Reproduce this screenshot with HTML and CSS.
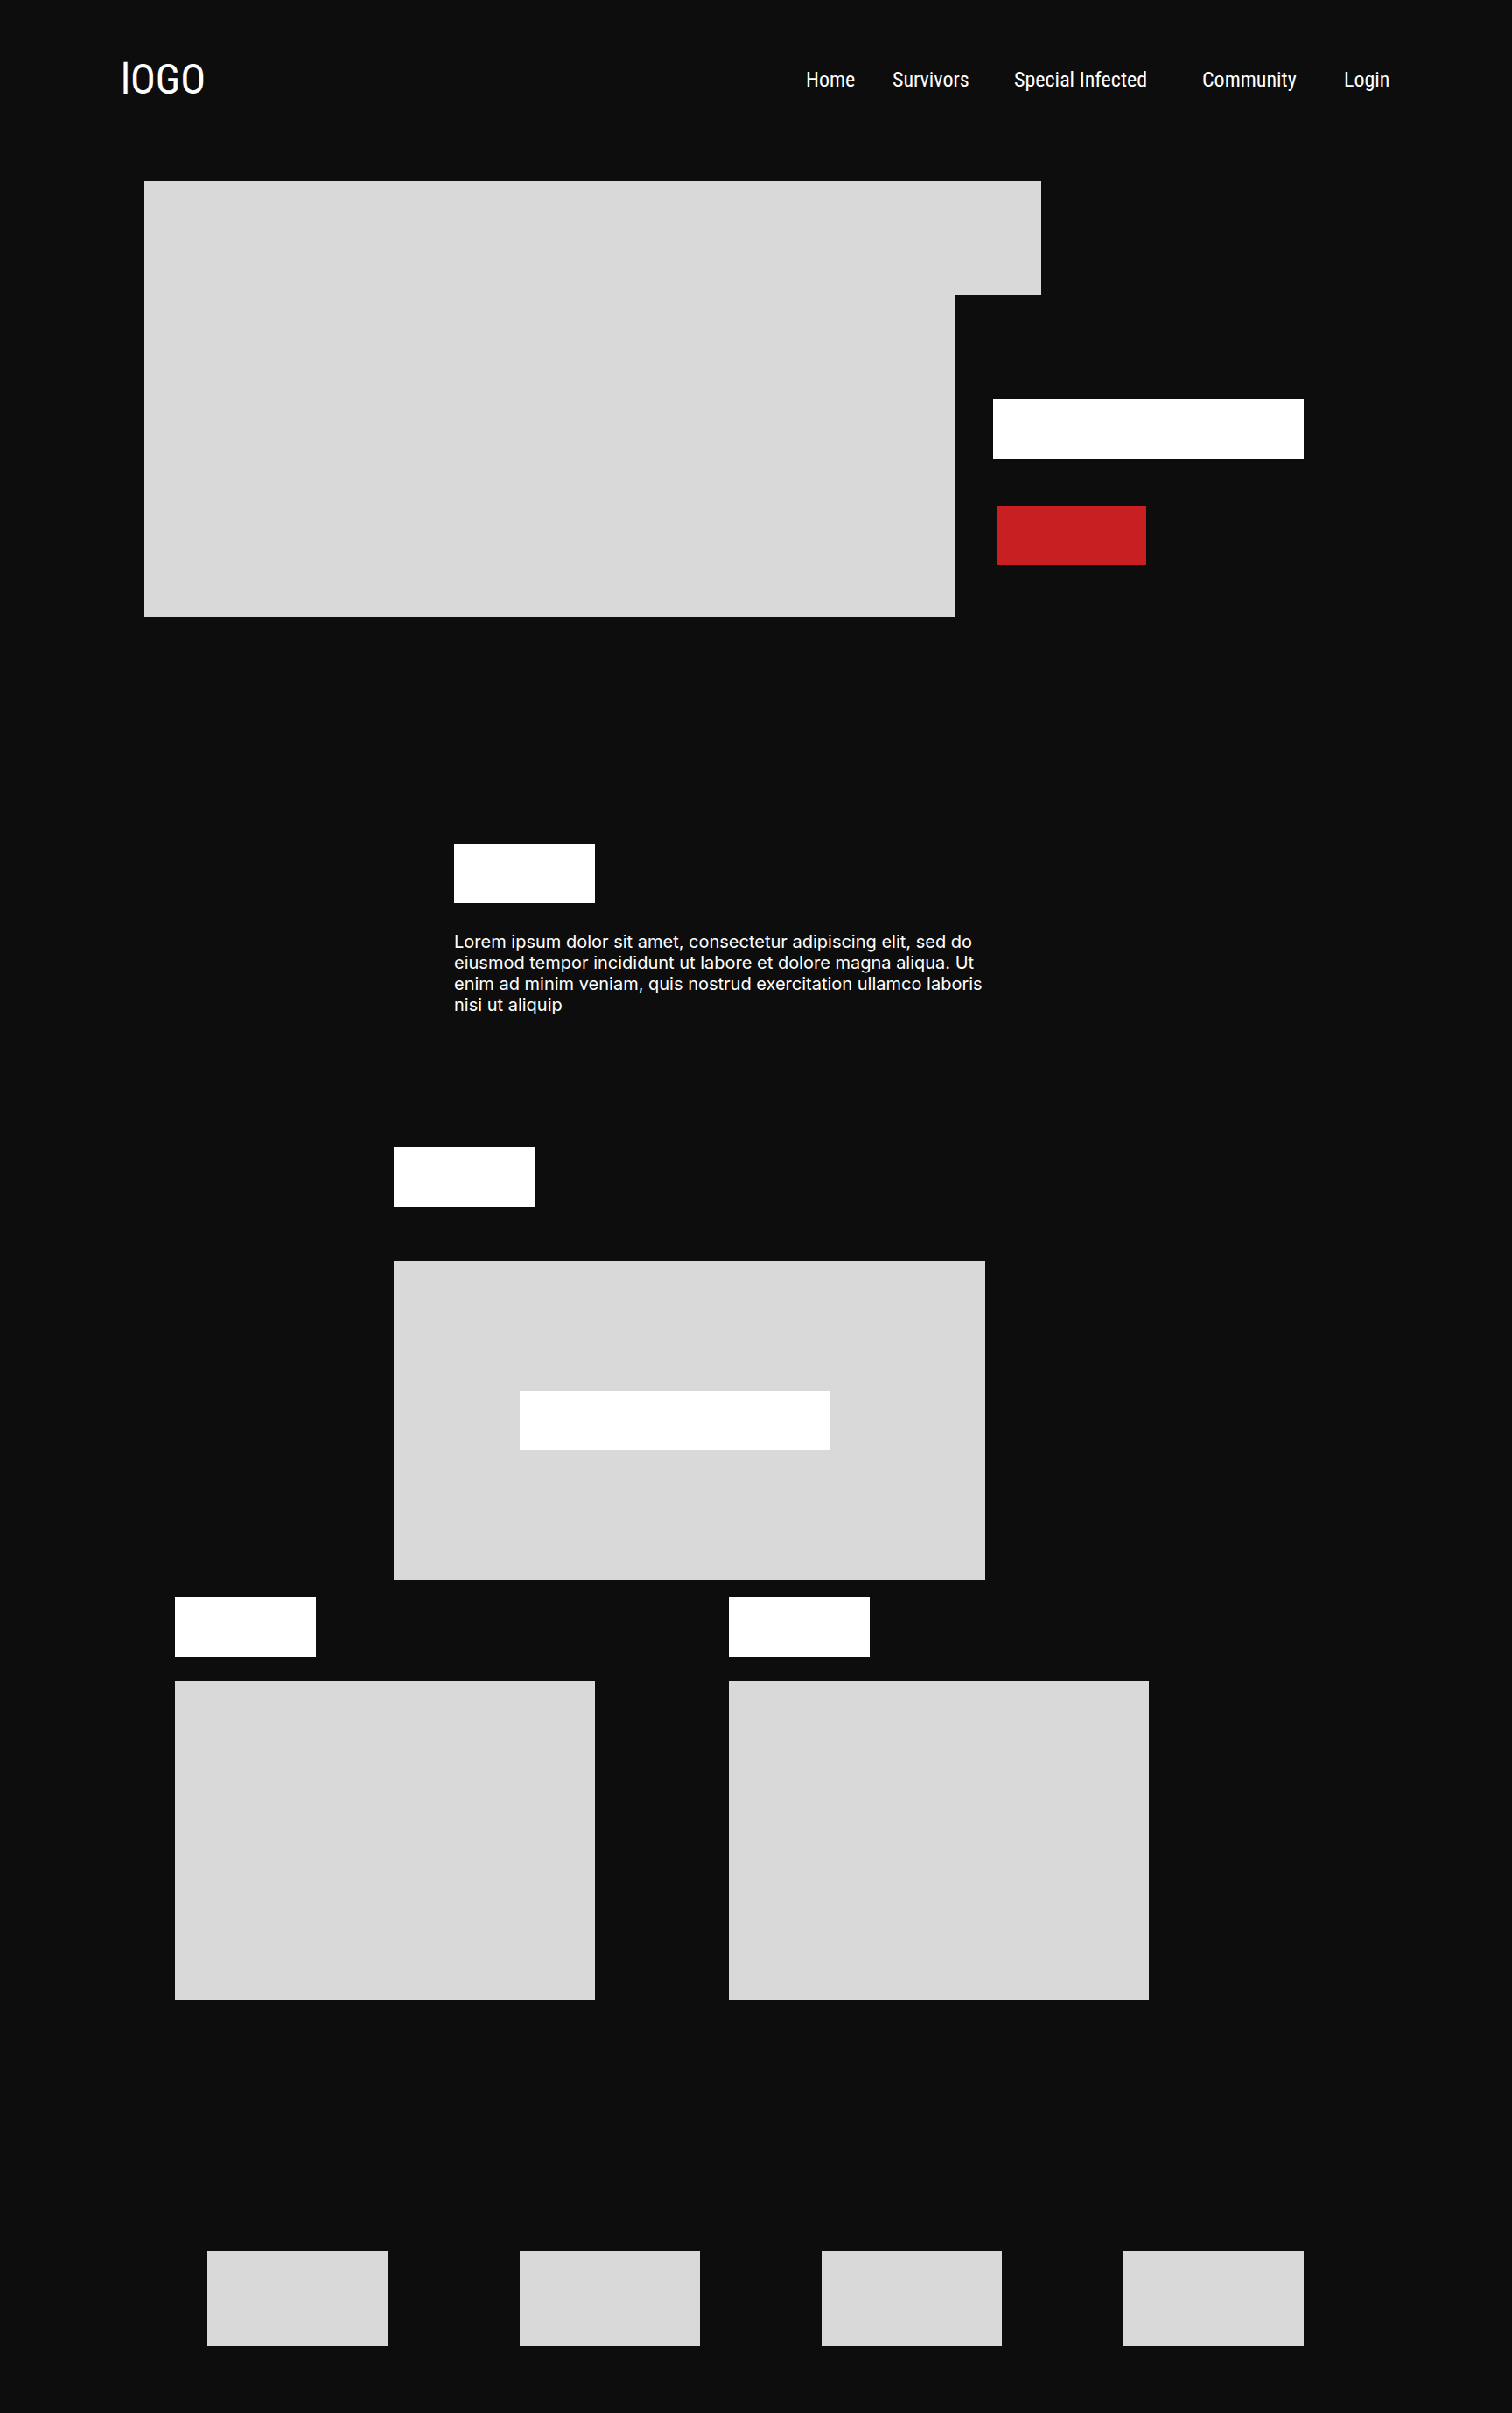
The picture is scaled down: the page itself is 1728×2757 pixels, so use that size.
FILE: index.html
```html
<!DOCTYPE html>
<html lang="en">
<head>
  <meta charset="utf-8">
  <meta name="viewport" content="width=device-width, initial-scale=1">
  <title>Home</title>
  <link rel="stylesheet" href="styles.css">
</head>
<body>
  <header class="header">
    <a class="logo" href="#">lOGO</a>
    <nav class="nav" aria-label="Main">
      <a href="#">Home</a>
      <a href="#">Survivors</a>
      <a href="#">Special Infected</a>
      <a href="#">Community</a>
      <a href="#">Login</a>
    </nav>
  </header>

  <main>
    <section class="hero">
      <div class="hero-banner media"></div>
      <div class="hero-picture media"></div>
      <div class="hero-copy">
        <div class="block"></div>
        <button class="hero-button" type="button" aria-label="Start"></button>
      </div>
    </section>

    <section class="about">
      <div class="label block"></div>
      <p class="about-text">Lorem ipsum dolor sit amet, consectetur adipiscing elit, sed do eiusmod tempor incididunt ut labore et dolore magna aliqua. Ut enim ad minim veniam, quis nostrud exercitation ullamco laboris nisi ut aliquip</p>
    </section>

    <section class="feature">
      <div class="label block"></div>
      <div class="feature-card media">
        <div class="feature-title block"></div>
      </div>
    </section>

    <section class="cards">
      <article class="card">
        <div class="label block"></div>
        <div class="card-picture media"></div>
      </article>
      <article class="card card-second">
        <div class="label block"></div>
        <div class="card-picture media"></div>
      </article>
    </section>
  </main>

  <footer class="footer">
    <div class="tile media"></div>
    <div class="tile media"></div>
    <div class="tile media"></div>
    <div class="tile media"></div>
  </footer>
</body>
</html>
```

FILE: styles.css
```css
* {
  box-sizing: border-box;
}

body {
  margin: 0;
  background: #0d0d0d;
  color: #fff;
  font-family: Inter, "Liberation Sans", sans-serif;
}

.media {
  background: #d9d9d9;
}

.block {
  height: 68px;
  background: #fff;
}

.label {
  width: 161px;
}

/* Header */
.header {
  display: grid;
  grid-template-columns: 138fr 783fr 807fr;
  align-items: center;
  padding: 63px 0 88px;
  font-family: "Roboto Condensed", "Liberation Sans Narrow", Roboto, sans-serif;
}

.header a {
  color: inherit;
  text-decoration: none;
  white-space: nowrap;
}

.logo {
  grid-column: 2;
  font-size: 48px;
  line-height: 56px;
}

.nav {
  display: grid;
  grid-template-columns: 99fr 139fr 215fr 162fr 192fr;
  font-size: 24px;
  line-height: 28px;
}

/* Hero */
.hero {
  display: grid;
  grid-template-columns: 165fr 926fr 44fr 55fr 300fr 238fr;
  grid-template-rows: 130px 368px;
}

.hero-banner {
  grid-area: 1 / 2 / 2 / 5;
}

.hero-picture {
  grid-area: 1 / 2 / 3 / 3;
}

.hero-copy {
  grid-area: 2 / 4 / 3 / 6;
  padding-top: 119px;
}

.hero-button {
  display: block;
  width: 171px;
  height: 68px;
  margin: 54px 4px 0;
  border: 0;
  background: #c81f22;
  cursor: pointer;
}

/* About */
.about {
  display: grid;
  grid-template-columns: 519fr 609fr 600fr;
  row-gap: 32px;
  padding-top: 259px;
}

.about > * {
  grid-column: 2;
}

.about-text {
  margin: 0;
  font-size: 20px;
  line-height: 24px;
}

/* Feature */
.feature {
  display: grid;
  grid-template-columns: 450fr 676fr 602fr;
  row-gap: 62px;
  padding-top: 151px;
}

.feature > * {
  grid-column: 2;
}

.feature-card {
  display: grid;
  grid-template-columns: 144fr 355fr 177fr;
  align-items: center;
  min-height: 364px;
}

.feature-title {
  grid-column: 2;
}

/* Cards */
.cards {
  display: grid;
  grid-template-columns: 200fr 480fr 153fr 480fr 415fr;
  padding-top: 20px;
}

.card {
  display: grid;
  grid-column: 2;
  row-gap: 28px;
}

.card-second {
  grid-column: 4;
}

.card-picture {
  height: 364px;
}

/* Footer */
.footer {
  display: grid;
  grid-template-columns: 237fr 206fr 151fr 206fr 139fr 206fr 139fr 206fr 238fr;
  padding: 287px 0 77px;
}

.tile {
  height: 108px;
}

.tile:nth-child(1) {
  grid-column: 2;
}

.tile:nth-child(2) {
  grid-column: 4;
}

.tile:nth-child(3) {
  grid-column: 6;
}

.tile:nth-child(4) {
  grid-column: 8;
}
```
